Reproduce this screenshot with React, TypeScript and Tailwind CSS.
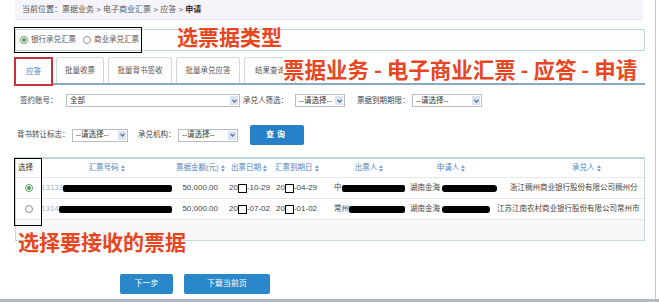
import React from 'react';

const tabs = ['应答', '批量收票', '批量背书签收', '批量承兑应答', '结果查询'];
const tabWidths = ['w-[37px]', 'w-[48px]', 'w-[64px]', 'w-[64px]', 'w-[52px]'];

const rows = [
  {
    checked: true,
    no: '13133',
    bar: 'w-[112px]',
    amount: '50,000.00',
    issue: '-10-29',
    due: '-04-29',
    drawer: '中',
    drawerBar: 'w-[66px]',
    applicantBar: 'w-[58px]',
    acceptor: '浙江稠州商业银行股份有限公司稠州分',
    acceptorPad: 'pl-[13px]',
  },
  {
    checked: false,
    no: '1314',
    bar: 'w-[113px]',
    amount: '50,000.00',
    issue: '-07-02',
    due: '-01-02',
    drawer: '常州',
    drawerBar: 'w-[60px]',
    applicantBar: 'w-[48px]',
    acceptor: '江苏江南农村商业银行股份有限公司常州市',
    acceptorPad: 'pl-0',
  },
];

function SortIcon() {
  return (
    <svg className="ml-[2px] inline-block h-[7px] w-[4px]" viewBox="0 0 4 7">
      <path d="M2 0L4 3H0z M2 7L0 4h4z" fill="#7ea6cf" />
    </svg>
  );
}

function Select({ width, label }: { width: string; label: string }) {
  return (
    <div className={`flex h-[13px] shrink-0 items-center border border-[#b9bcc0] bg-white ${width}`}>
      <span className="flex-1 whitespace-nowrap pl-[3px] leading-none text-[#333]">{label}</span>
      <span className="mr-[1px] flex h-[9px] w-[8px] items-center justify-center bg-[#dbe3f1]">
        <svg className="h-[4px] w-[5px]" viewBox="0 0 5 4">
          <path d="M0.5 0.8L2.5 3L4.5 0.8" fill="none" stroke="#4a6fa5" strokeWidth="1.2" />
        </svg>
      </span>
    </div>
  );
}

function Radio({ checked }: { checked: boolean }) {
  return (
    <span
      className={`flex h-[8px] w-[8px] items-center justify-center rounded-full border ${
        checked ? 'border-[#5b9b6a]' : 'border-[#8a8f95]'
      } bg-white`}
    >
      {checked && <span className="h-[4px] w-[4px] rounded-full bg-[#4f9a5e]" />}
    </span>
  );
}

function DateCell({ tail }: { tail: string }) {
  return (
    <span className="flex items-center text-[8px] text-[#444]">
      20
      <span className="h-[9px] w-[9px] border border-black bg-white" />
      {tail}
    </span>
  );
}

export default function App() {
  return (
    <div className="relative h-[302px] w-[659px] overflow-hidden bg-white font-['Liberation_Sans','Noto_Sans_CJK_SC',sans-serif] text-[7.5px] text-[#444]">
      <div className="flex h-[299px] w-[656px] flex-col border-r border-[#c5c9ce] pl-[15px] pr-[10px]">
        {/* Breadcrumb */}
        <div className="flex h-[20px] w-[628px] items-center whitespace-nowrap border-b border-[#e9e9f0] bg-[#f4f4fa] pl-[7px] text-[8px] text-[#555]">
          当前位置：票据业务 &gt; 电子商业汇票 &gt; 应答 &gt;&nbsp;<span className="font-bold text-[#333]">申请</span>
        </div>

        {/* Bill type */}
        <div className="mt-[9px] flex h-[22px] items-center gap-[3px] border border-[#c3d1d8] bg-[#fefefe] pl-[4px] text-[#555]">
          <Radio checked />
          <span className="mr-[4px]">银行承兑汇票</span>
          <Radio checked={false} />
          <span>商业承兑汇票</span>
        </div>

        {/* Tabs */}
        <div className="mt-[6px] flex h-[28px] items-end border-b-2 border-[#86aac0]">
          {tabs.map((t, i) => (
            <div
              key={t}
              className={`mr-[4px] flex items-center justify-center whitespace-nowrap rounded-t-[3px] border border-b-0 border-[#d4d9de] ${tabWidths[i]} ${
                i === 0 ? '-mb-[2px] h-[28px] bg-white text-[#3b7fc0]' : 'h-[26px] bg-white text-[#555]'
              }`}
            >
              {t}
            </div>
          ))}
        </div>

        {/* Filter row 1 */}
        <div className="mt-[9px] flex h-[13px] items-center whitespace-nowrap">
          <span className="ml-[5px] w-[46px] shrink-0">签约账号：</span>
          <Select width="w-[174px]" label="全部" />
          <span className="ml-[3px] w-[52px] shrink-0">承兑人筛选：</span>
          <Select width="w-[50px]" label="--请选择--" />
          <span className="ml-[12px] w-[55px] shrink-0">票据到期期限：</span>
          <Select width="w-[70px]" label="--请选择--" />
        </div>

        {/* Filter row 2 */}
        <div className="mt-[18px] flex h-[20px] items-center whitespace-nowrap">
          <span className="ml-[2px] w-[55px] shrink-0">背书转让标志：</span>
          <Select width="w-[56px]" label="--请选择--" />
          <span className="ml-[10px] w-[40px] shrink-0">承兑机构：</span>
          <Select width="w-[60px]" label="--请选择--" />
          <button className="ml-[12px] h-[20px] w-[54px] rounded-[2px] bg-[#2681c8] text-[8px] font-bold tracking-[3px] text-white">
            查询
          </button>
        </div>

        {/* Table */}
        <div className="mt-[12px] border-x border-b border-t-2 border-[#c4d8dc] border-t-[#bcd6da]">
          <div className="grid h-[19px] grid-cols-[25px_131px_52px_46px_63px_72px_92px_147px] items-center whitespace-nowrap border-b border-[#e4e9ea] text-[#4a86c0]">
            <span className="pl-[2px] text-[#333]">选择</span>
            <span className="text-center">汇票号码<SortIcon /></span>
            <span className="pl-[4px]">票据金额(元)<SortIcon /></span>
            <span className="pl-[7px]">出票日期<SortIcon /></span>
            <span className="pl-[5px]">汇票到期日<SortIcon /></span>
            <span className="text-center">出票人<SortIcon /></span>
            <span className="text-center">申请人<SortIcon /></span>
            <span className="pl-[75px]">承兑人<SortIcon /></span>
          </div>
          {rows.map((r) => (
            <div
              key={r.no}
              className="grid h-[21px] grid-cols-[25px_131px_52px_46px_63px_72px_92px_147px] items-center whitespace-nowrap border-b border-[#e4e9ea] bg-white"
            >
              <span className="flex justify-center">
                <Radio checked={r.checked} />
              </span>
              <span className="flex items-center text-[8px]">
                <span className="text-[#9bb8d3]">{r.no}</span>
                <span className={`h-[7px] rounded-[2px] bg-black ${r.bar}`} />
              </span>
              <span className="pr-[6px] text-right text-[8px]">{r.amount}</span>
              <span className="pl-[5px]">
                <DateCell tail={r.issue} />
              </span>
              <span className="pl-[6px]">
                <DateCell tail={r.due} />
              </span>
              <span className="flex items-center pl-[1px]">
                {r.drawer}
                <span className={`h-[7px] rounded-[2px] bg-black ${r.drawerBar}`} />
              </span>
              <span className="flex items-center pl-[5px]">
                湖南金海
                <span className={`ml-[2px] h-[7px] rounded-[3px] bg-black ${r.applicantBar}`} />
              </span>
              <span className={r.acceptorPad}>{r.acceptor}</span>
            </div>
          ))}
          <div className="h-[20px] bg-[#f6f9f8]" />
        </div>

        {/* Actions */}
        <div className="mt-[33px] flex h-[20px] gap-[11px] pl-[105px] text-[8px]">
          <button className="h-[20px] w-[53px] rounded-[2px] bg-[#2a87c9] text-white">下一步</button>
          <button className="h-[20px] w-[86px] rounded-[2px] bg-[#2a87c9] text-white">下载当前页</button>
        </div>
      </div>
      <div className="h-[3px] w-[659px] bg-[#b3b9c0]" />

      {/* Annotations */}
      <div className="absolute left-[14px] top-[27px] h-[26px] w-[128px] border-[1.5px] border-black" />
      <div className="absolute left-[177px] top-[26px] font-['Noto_Sans_CJK_SC',sans-serif] text-[21px] font-bold leading-none text-[#e8461f]">
        选票据类型
      </div>
      <div className="absolute left-[14px] top-[57px] h-[29px] w-[39px] border-[2.5px] border-[#c8303d]" />
      <div className="absolute left-[283px] top-[56px] bg-white pr-[2px] font-['Noto_Sans_CJK_SC',sans-serif] text-[21.5px] font-bold leading-[25px] text-[#e8461f]">
        票据业务 - 电子商业汇票 - 应答 - 申请
      </div>
      <div className="absolute left-[14px] top-[158px] h-[68px] w-[28px] border-[1.5px] border-black" />
      <div className="absolute left-[18px] top-[231px] font-['Noto_Sans_CJK_SC',sans-serif] text-[21px] font-bold leading-none text-[#e8461f]">
        选择要接收的票据
      </div>
    </div>
  );
}
